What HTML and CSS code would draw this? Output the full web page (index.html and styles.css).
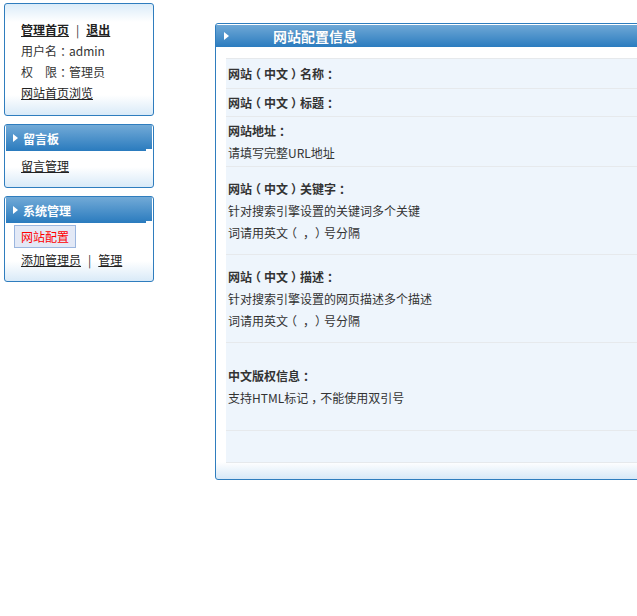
FILE: index.html
```html
<!DOCTYPE html>
<html lang="zh-CN">
<head>
<meta charset="utf-8">
<title>网站配置信息</title>
<link rel="stylesheet" href="styles.css">
</head>
<body>
<div class="page">
  <aside class="sidebar">
    <div class="box box-info">
      <p><a class="strong" href="#">管理首页</a><span class="sep">|</span><a class="strong" href="#">退出</a></p>
      <p>用户名<span class="punct">：</span>admin</p>
      <p>权　限<span class="punct">：</span>管理员</p>
      <p><a href="#">网站首页浏览</a></p>
    </div>
    <div class="box">
      <div class="box-head"><i class="arrow"></i>留言板</div>
      <div class="box-body"><p><a href="#">留言管理</a></p></div>
    </div>
    <div class="box">
      <div class="box-head"><i class="arrow"></i>系统管理</div>
      <div class="box-body box-body-sys">
        <p class="current">网站配置</p>
        <p class="links"><a href="#">添加管理员</a><span class="sep">|</span><a href="#">管理</a></p>
      </div>
    </div>
  </aside>
  <main class="main">
    <div class="main-head"><i class="arrow"></i><span class="main-title">网站配置信息</span></div>
    <div class="main-body">
      <div class="config">
        <div class="row h30"><div class="cell"><b>网站<span class="punct">（</span>中文<span class="punct">）</span>名称<span class="punct">：</span></b></div></div>
        <div class="row h28"><div class="cell"><b>网站<span class="punct">（</span>中文<span class="punct">）</span>标题<span class="punct">：</span></b></div></div>
        <div class="row h50"><div class="cell"><b>网站地址<span class="punct">：</span></b><br>请填写完整URL地址</div></div>
        <div class="row h88"><div class="cell"><b>网站<span class="punct">（</span>中文<span class="punct">）</span>关键字<span class="punct">：</span></b><br>针对搜索引擎设置的关键词多个关键<br>词请用英文<span class="punct">（</span><span class="punct">，</span><span class="punct">）</span>号分隔</div></div>
        <div class="row h88"><div class="cell"><b>网站<span class="punct">（</span>中文<span class="punct">）</span>描述<span class="punct">：</span></b><br>针对搜索引擎设置的网页描述多个描述<br>词请用英文<span class="punct">（</span><span class="punct">，</span><span class="punct">）</span>号分隔</div></div>
        <div class="row h88"><div class="cell"><b>中文版权信息<span class="punct">：</span></b><br>支持HTML标记<span class="punct">，</span>不能使用双引号</div></div>
        <div class="row h32 last"><div class="cell"></div></div>
      </div>
    </div>
  </main>
</div>
</body>
</html>
```
FILE: styles.css
```css
html, body {
  margin: 0;
  padding: 0;
  background: #fff;
}
body {
  font-family: "Noto Sans CJK SC", "Liberation Sans", sans-serif;
  font-size: 12px;
  color: #333;
}
p { margin: 0; }
a { color: #222; text-decoration: underline; }
a.strong { font-weight: bold; }
.sep { margin: 0 7px; color: #333; }
.punct {
  display: inline-block;
  width: 1em;
  text-align: center;
  font-feature-settings: "halt";
  text-decoration: inherit;
}

.page {
  display: flex;
  align-items: flex-start;
  width: 637px;
  height: 616px;
  overflow: hidden;
  padding: 3px 0 0 4px;
  box-sizing: border-box;
}

.sidebar {
  width: 150px;
  flex-shrink: 0;
  display: flex;
  flex-direction: column;
  gap: 8px;
}

.box {
  position: relative;
  border: 1px solid #2f7dbe;
  border-radius: 3px;
  padding: 0 1px;
  background: linear-gradient(to bottom, #fff 0, #fff calc(100% - 20px), #d9eaf8 100%);
}
.box-info {
  height: 113px;
  box-sizing: border-box;
  padding: 15px 0 0 16px;
  line-height: 21px;
  background: linear-gradient(to bottom, #dbecf9 0, #fff 18px, #fff calc(100% - 20px), #d9eaf8 100%);
}

.box-head {
  position: relative;
  height: 26px;
  padding-left: 7px;
  color: #fff;
  font-weight: bold;
  background: linear-gradient(to bottom, #72aad7, #2a7bbe);
  display: flex;
  align-items: center;
}
.box-head::after {
  content: "";
  position: absolute;
  right: 0;
  bottom: 0;
  width: 6px;
  height: 2px;
  background: #fff;
}
.arrow {
  display: inline-block;
  width: 0;
  height: 0;
  border-left: 5px solid #fff;
  border-top: 4px solid transparent;
  border-bottom: 4px solid transparent;
  margin-right: 5px;
}

.box-body {
  padding: 4px 0 11px 15px;
  line-height: 21px;
}
.box-body-sys {
  padding: 2px 0 10px 8px;
}
.current {
  display: inline-block;
  height: 21px;
  line-height: 21px;
  padding: 0 6px;
  border: 1px solid #9bb6df;
  background: #e3e9f6;
  color: #f00;
}
.links {
  margin-top: 1px;
  line-height: 22px;
  padding-left: 7px;
}

.main {
  margin: 20px 0 0 61px;
  width: 460px;
  flex-shrink: 0;
  border: 1px solid #2f7dbe;
  border-radius: 3px;
  padding-top: 1px;
  background: linear-gradient(to bottom, #fff 0, #fff calc(100% - 17px), #d7e8f7 100%);
}
.main-head {
  height: 22px;
  padding-left: 8px;
  display: flex;
  align-items: center;
  color: #fff;
  background: linear-gradient(to bottom, #6fa8d6, #2b7cbf);
}
.main-head .arrow {
  margin-right: 44px;
}
.main-title {
  font-size: 14px;
  font-weight: bold;
  text-shadow: 0 0 1px rgba(20, 70, 120, 0.4);
}
.main-body {
  padding: 11px 0 16px 10px;
}

.config {
  background: #eef5fc;
}
.row {
  display: flex;
  align-items: center;
  border-top: 1px solid #e6e9ec;
  box-sizing: border-box;
}
.row.last { border-bottom: 1px solid #e6e9ec; height: 33px; }
.h30 { height: 30px; }
.h28 { height: 28px; }
.h50 { height: 50px; }
.h88 { height: 88px; }
.h32 { height: 32px; }
.cell {
  padding-left: 2px;
  line-height: 22px;
  color: #333;
}
.cell b { color: #333; }
```
